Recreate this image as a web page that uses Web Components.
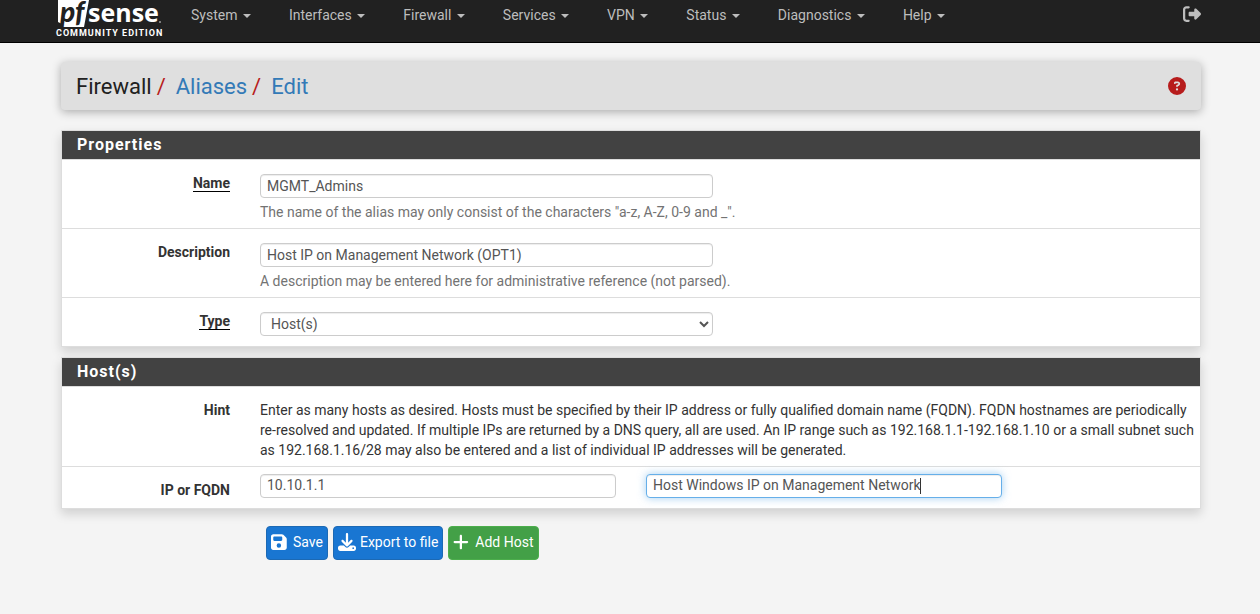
<!DOCTYPE html>
<html lang="en">
<head>
<meta charset="utf-8">
<meta name="viewport" content="width=device-width, initial-scale=1">
<title>Firewall: Aliases: Edit</title>
<style>
  body { margin: 0; background: #f4f4f4; color: #333; font: 14px/20px Roboto, sans-serif; }
</style>
</head>
<body>
<pf-page>
  <pf-navbar slot="nav"></pf-navbar>
  <pf-breadcrumb></pf-breadcrumb>
  <pf-panel heading="Properties">
    <pf-field label="Name" required value="MGMT_Admins">The name of the alias may only consist of the characters "a-z, A-Z, 0-9 and _".</pf-field>
    <pf-field label="Description" value="Host IP on Management Network (OPT1)">A description may be entered here for administrative reference (not parsed).</pf-field>
    <pf-field label="Type" required options="Host(s)"></pf-field>
  </pf-panel>
  <pf-panel heading="Host(s)">
    <pf-hint label="Hint">Enter as many hosts as desired. Hosts must be specified by their IP address or fully qualified domain name (FQDN). FQDN hostnames are periodically re-resolved and updated. If multiple IPs are returned by a DNS query, all are used. An IP range such as 192.168.1.1-192.168.1.10 or a small subnet such as 192.168.1.16/28 may also be entered and a list of individual IP addresses will be generated.</pf-hint>
    <pf-host-row label="IP or FQDN" address="10.10.1.1" detail="Host Windows IP on Management Network"></pf-host-row>
  </pf-panel>
  <pf-actions>
    <pf-button icon="save">Save</pf-button>
    <pf-button icon="download">Export to file</pf-button>
    <pf-button icon="plus" tone="success">Add Host</pf-button>
  </pf-actions>
</pf-page>

<script>
const ICONS = {
  save: [448, 'M64 32C28.7 32 0 60.7 0 96L0 416c0 35.3 28.7 64 64 64l320 0c35.3 0 64-28.7 64-64l0-242.7c0-17-6.7-33.3-18.7-45.3L352 50.7C340 38.7 323.7 32 306.7 32L64 32zm0 96c0-17.7 14.3-32 32-32l192 0c17.7 0 32 14.3 32 32l0 64c0 17.7-14.3 32-32 32L96 224c-17.7 0-32-14.3-32-32l0-64zM224 288a64 64 0 1 1 0 128 64 64 0 1 1 0-128z'],
  download: [512, 'M288 32c0-17.7-14.3-32-32-32s-32 14.3-32 32l0 242.7-73.4-73.4c-12.5-12.5-32.8-12.5-45.3 0s-12.5 32.8 0 45.3l128 128c12.5 12.5 32.8 12.5 45.3 0l128-128c12.5-12.5 12.5-32.8 0-45.3s-32.8-12.5-45.3 0L288 274.7 288 32zM64 352c-35.3 0-64 28.7-64 64l0 32c0 35.3 28.7 64 64 64l384 0c35.3 0 64-28.7 64-64l0-32c0-35.3-28.7-64-64-64l-101.5 0-45.3 45.3c-25 25-65.5 25-90.5 0L165.5 352 64 352zm368 56a24 24 0 1 1 0 48 24 24 0 1 1 0-48z'],
  plus: [448, 'M256 80c0-17.7-14.3-32-32-32s-32 14.3-32 32l0 144L48 224c-17.7 0-32 14.3-32 32s14.3 32 32 32l144 0 0 144c0 17.7 14.3 32 32 32s32-14.3 32-32l0-144 144 0c17.7 0 32-14.3 32-32s-14.3-32-32-32l-144 0 0-144z'],
  help: [512, 'M256 512A256 256 0 1 0 256 0a256 256 0 1 0 0 512zM169.8 165.3c7.9-22.3 29.1-37.3 52.8-37.3l58.3 0c34.9 0 63.1 28.3 63.1 63.1c0 22.6-12.1 43.5-31.7 54.8L280 264.4c-.2 13-10.9 23.6-24 23.6c-13.3 0-24-10.7-24-24l0-13.5c0-8.6 4.6-16.5 12.1-20.8l44.3-25.4c4.7-2.7 7.6-7.7 7.6-13.1c0-8.4-6.8-15.1-15.1-15.1l-58.3 0c-3.4 0-6.4 2.1-7.5 5.3l-.4 1.2c-4.4 12.5-18.2 19-30.6 14.6s-19-18.2-14.6-30.6l.4-1.2zM224 352a32 32 0 1 1 64 0 32 32 0 1 1 -64 0z'],
  logout: [512, 'M377.9 105.9L500.7 228.7c7.2 7.2 11.3 17.1 11.3 27.3s-4.1 20.1-11.3 27.3L377.9 406.1c-6.4 6.4-15 9.9-24 9.9c-18.7 0-33.9-15.2-33.9-33.9l0-62.1-128 0c-17.7 0-32-14.3-32-32l0-64c0-17.7 14.3-32 32-32l128 0 0-62.1c0-18.7 15.2-33.9 33.9-33.9c9 0 17.6 3.6 24 9.9zM160 96L96 96c-17.7 0-32 14.3-32 32l0 256c0 17.7 14.3 32 32 32l64 0c17.7 0 32 14.3 32 32s-14.3 32-32 32l-64 0c-53 0-96-43-96-96L0 128C0 75 43 32 96 32l64 0c17.7 0 32 14.3 32 32s-14.3 32-32 32z']
};
const icon = name => `<svg width="18" height="18" viewBox="0 0 ${ICONS[name][0]} 512" preserveAspectRatio="xMinYMid" fill="currentColor" aria-hidden="true"><path d="${ICONS[name][1]}"/></svg>`;

class PfElement extends HTMLElement {
  constructor() {
    super();
    this.attachShadow({ mode: 'open' });
  }
  connectedCallback() {
    this.shadowRoot.innerHTML = `<style>* { box-sizing: border-box; }\n${this.styles()}</style>${this.markup()}`;
  }
}

customElements.define('pf-page', class extends PfElement {
  styles() {
    return `
      :host { display: block; }
      main { max-width: 1142px; margin: 19px auto 0; padding-left: 2px; display: flex; flex-direction: column; }
    `;
  }
  markup() { return '<slot name="nav"></slot><main><slot></slot></main>'; }
});

customElements.define('pf-navbar', class extends PfElement {
  styles() {
    return `
      :host { display: block; background: #212121; border-bottom: 1px solid #000; color: #bdbdbd; }
      a { color: inherit; text-decoration: none; }
      nav { max-width: 1150px; height: 42px; margin: 0 auto; display: flex; align-items: flex-start; }
      .brand { flex: none; width: 107px; height: 42px; margin-right: 10px; color: #fff; display: block; }
      .brand svg { display: block; overflow: visible; }
      ul { flex: 1; display: flex; list-style: none; margin: 5px 0 0; padding: 0; }
      li a { display: block; padding: 0 19px; white-space: nowrap; }
      .caret { display: inline-block; margin-left: 2px; vertical-align: middle; border: 4px solid transparent; border-top-color: currentColor; border-bottom: 0; }
      .out { margin: 5px 4px 0 0; height: 18px; }
      .out svg { display: block; }
    `;
  }
  markup() {
    const items = ['System', 'Interfaces', 'Firewall', 'Services', 'VPN', 'Status', 'Diagnostics', 'Help'];
    return `<nav>
      <a class="brand" href="#" aria-label="pfSense Community Edition">
        <svg width="107" height="42" viewBox="0 0 107 42" fill="#fff">
          <path d="M3 0H34L29 27H6L7 24L3 22Z"/>
          <text x="5" y="22" font-family="Lato" font-weight="900" font-style="italic" font-size="28" fill="#212121">pf</text>
          <text x="33" y="22" font-family="Open Sans" font-weight="700" font-size="25">sense</text>
          <circle cx="105" cy="22" r="1" fill="#999"/>
          <text x="1" y="36" font-family="Roboto" font-weight="700" font-size="9" letter-spacing="1">COMMUNITY EDITION</text>
        </svg>
      </a>
      <ul>${items.map(t => `<li><a href="#">${t} <span class="caret"></span></a></li>`).join('')}</ul>
      <a class="out" href="#" aria-label="Log out">${icon('logout')}</a>
    </nav>`;
  }
});

customElements.define('pf-breadcrumb', class extends PfElement {
  styles() {
    return `
      :host { display: block; background: #dfdfdf; border-radius: 4px; box-shadow: 0 2px 10px rgba(0,0,0,.3); }
      header { height: 48px; padding: 0 15px; display: flex; justify-content: space-between; align-items: center; }
      ol { list-style: none; margin: 0; padding: 2px 0 0; display: flex; font-size: 22px; line-height: 28px; color: #212121; }
      li + li::before { content: "/"; color: #b71c1c; padding: 0 10px 0 5px; }
      a { color: #337ab7; text-decoration: none; }
      .help { color: #b71c1c; height: 18px; }
      .help svg { display: block; }
    `;
  }
  markup() {
    return `<header><ol><li>Firewall</li><li><a href="#">Aliases</a></li><li><a href="#">Edit</a></li></ol>
      <a class="help" href="#" aria-label="Help for this page">${icon('help')}</a></header>`;
  }
});

customElements.define('pf-panel', class extends PfElement {
  styles() {
    return `
      :host { display: block; margin-top: 10px; background: #fff; border: 1px solid #ddd; box-shadow: 0 5px 10px rgba(0,0,0,.15); }
      :host(:first-of-type) { margin-top: 20px; }
      h2 { margin: 0; padding: 4px 15px; background: #424242; color: #fff; font-size: 16px; line-height: 20px; font-weight: 700; letter-spacing: 1px; }
    `;
  }
  markup() { return `<section><h2>${this.getAttribute('heading')}</h2><slot></slot></section>`; }
});

const rowStyles = `
  :host { display: block; border-top: 1px solid #ddd; }
  .row { display: flex; margin: 0 -10px; }
  .label { flex: none; width: 16.6667%; padding: 13px 15px 0; text-align: right; font-weight: 700; }
  .label.required span { border-bottom: 1px solid #000; }
  .cell { flex: none; padding: 0 15px; }
  input, select { display: block; width: 100%; height: 24px; margin: 0; padding: 0 6px; color: #555;
    background: #fff; border: 1px solid #ccc; border-radius: 4px; box-shadow: inset 0 1px 1px rgba(0,0,0,.075);
    font: inherit; outline: none; }
`;

customElements.define('pf-field', class extends PfElement {
  styles() {
    return `${rowStyles}
      .cell { width: 41.6667%; padding-top: 14px; padding-bottom: 10px; }
      .cell.described { padding-bottom: 6px; }
      .help { margin: 4px 0 0; color: #737373; white-space: nowrap; }
    `;
  }
  markup() {
    const options = this.getAttribute('options');
    const help = this.textContent.trim() !== '';
    const control = options
      ? `<select id="control">${options.split('|').map(o => `<option>${o}</option>`).join('')}</select>`
      : `<input id="control" type="text" value="${this.getAttribute('value')}">`;
    return `<div class="row">
      <label class="label ${this.hasAttribute('required') ? 'required' : ''}" for="control"><span>${this.getAttribute('label')}</span></label>
      <div class="cell ${help ? 'described' : ''}">${control}${help ? '<p class="help"><slot></slot></p>' : ''}</div>
    </div>`;
  }
});

customElements.define('pf-hint', class extends PfElement {
  styles() {
    return `${rowStyles}
      .cell { width: 83.3333%; padding-top: 13px; padding-bottom: 6px; }
    `;
  }
  markup() {
    return `<div class="row"><div class="label">${this.getAttribute('label')}</div><div class="cell"><slot></slot></div></div>`;
  }
});

customElements.define('pf-host-row', class extends PfElement {
  styles() {
    return `${rowStyles}
      .cell { width: 33.3333%; padding-top: 7px; padding-bottom: 10px; }
      input { padding-bottom: 2px; }
      .active { position: relative; }
      .active input { border-color: #66afe9; box-shadow: inset 0 1px 1px rgba(0,0,0,.075), 0 0 8px rgba(102,175,233,.6); caret-color: transparent; }
      .active::after { content: ""; position: absolute; left: 274px; top: 4px; width: 1px; height: 16px; background: #333; }
    `;
  }
  markup() {
    return `<div class="row">
      <label class="label" for="address">${this.getAttribute('label')}</label>
      <div class="cell"><input id="address" type="text" value="${this.getAttribute('address')}"></div>
      <div class="cell"><div class="active"><input type="text" aria-label="Description" value="${this.getAttribute('detail')}"></div></div>
    </div>`;
  }
});

customElements.define('pf-actions', class extends PfElement {
  styles() { return ':host { display: flex; gap: 5px; margin-top: 17px; padding: 0 205px; }'; }
  markup() { return '<slot></slot>'; }
});

customElements.define('pf-button', class extends PfElement {
  styles() {
    return `
      :host { display: block; flex: none; }
      button { display: flex; align-items: center; height: 34px; margin: 0; padding: 0 4px 2px; gap: 4px;
        color: #fff; background: #1976d2; border: 1px solid #1c69b4; border-radius: 4px; font: inherit; white-space: nowrap; cursor: pointer; }
      :host([tone="success"]) button { background: #43a047; border-color: #4cae4c; }
    `;
  }
  markup() { return `<button type="button">${icon(this.getAttribute('icon'))}<slot></slot></button>`; }
});
</script>
</body>
</html>
